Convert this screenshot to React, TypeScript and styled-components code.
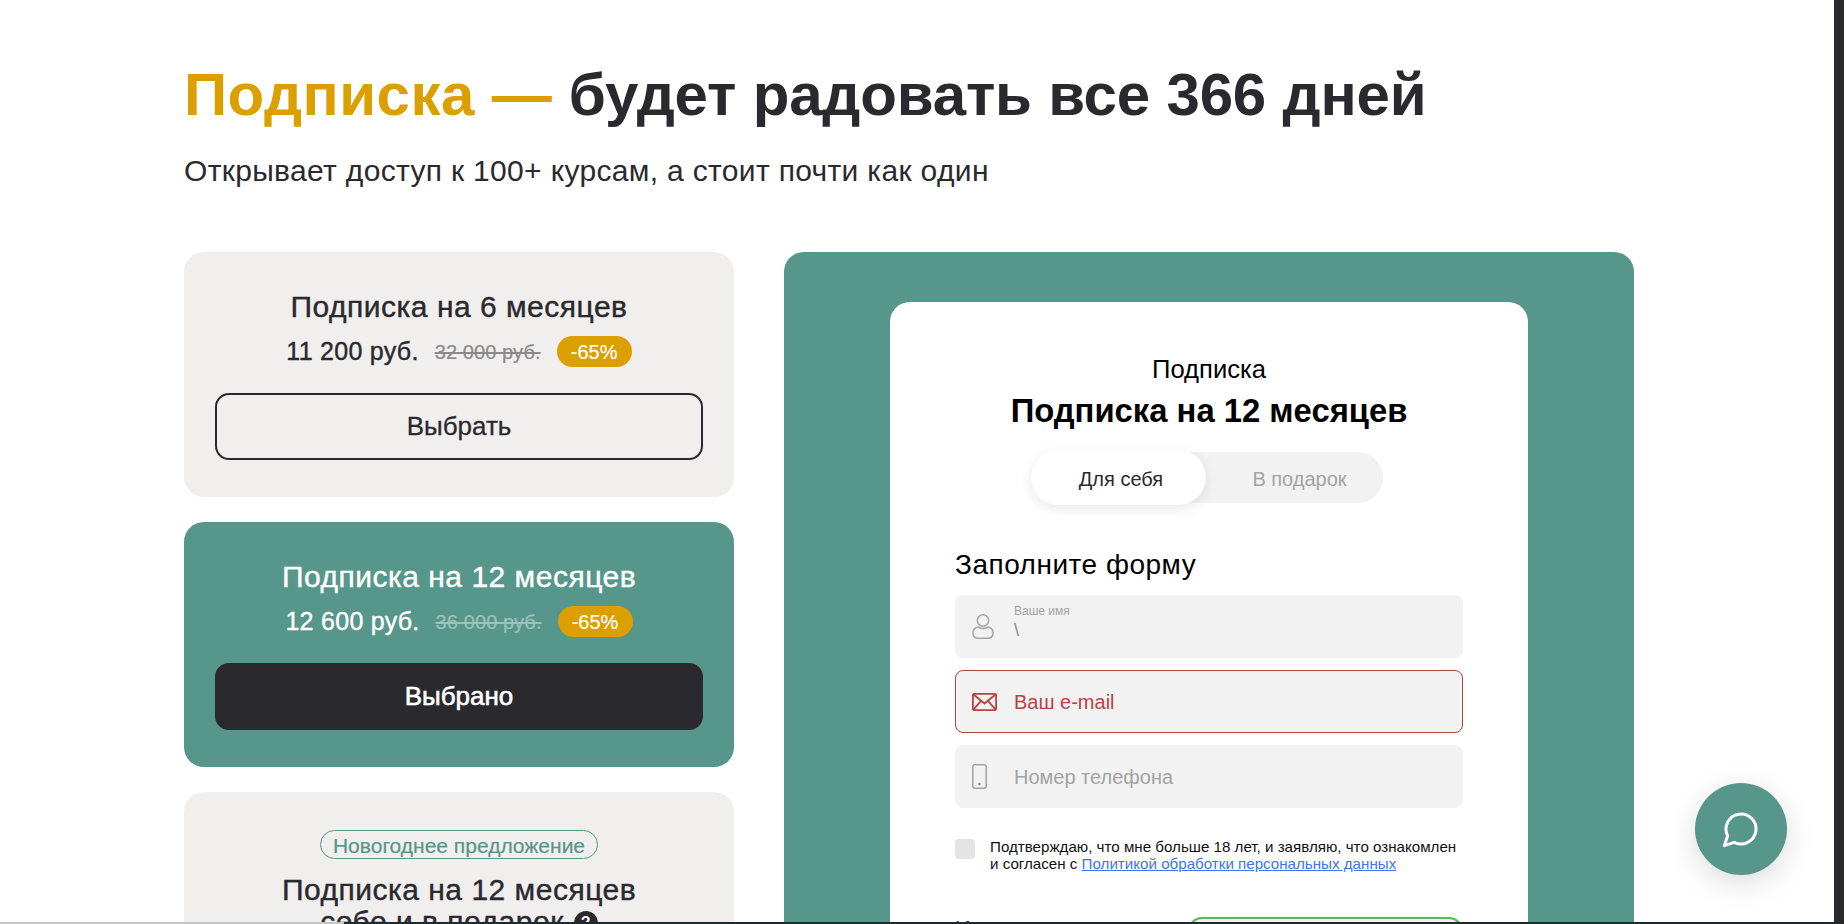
import React from "react";
import styled, { createGlobalStyle } from "styled-components";

const Global = createGlobalStyle`
  html, body { margin: 0; padding: 0; height: 100%; background: #fff; overflow: hidden; }
  #root { height: 100%; }
  * { box-sizing: border-box; }
  body { font-family: "Liberation Sans", Arial, sans-serif; color: #2a292e; }
`;

const green = "#57968a";
const dark = "#2a292e";
const gold = "#db9f00";
const danger = "#b84343";

const Viewport = styled.div`
  position: relative;
  width: 1844px;
  height: 924px;
  display: flex;
  flex-direction: column;
  overflow: hidden;
`;
const Workspace = styled.div`
  flex: 1;
  min-height: 0;
  display: flex;
`;
const Page = styled.main`
  flex: 1;
  min-width: 0;
  overflow: hidden;
  padding: 59px 0 0 184px;
  background: #fff;
`;
const ScrollEdge = styled.div`
  width: 10px;
  background: ${dark};
`;
const BottomEdge = styled.div`
  height: 2px;
  flex: none;
  display: flex;
  background: #1b2b2e;
`;
const BottomThumb = styled.div`
  width: 344px;
  background: #c6c6c6;
`;
const Heading = styled.h1`
  margin: 0;
  font-size: 60px;
  line-height: 72px;
  font-weight: 700;
  letter-spacing: -0.17px;
  color: ${dark};
`;
const Accent = styled.span`
  color: ${gold};
  letter-spacing: 0.47px;
`;
const Subtitle = styled.p`
  margin: 22px 0 63px;
  font-size: 30px;
  line-height: 36px;
  letter-spacing: 0.33px;
  color: ${dark};
`;
const Columns = styled.div`
  display: flex;
  gap: 50px;
  align-items: flex-start;
`;
const PlanColumn = styled.div`
  width: 550px;
  flex: none;
  display: flex;
  flex-direction: column;
  gap: 25px;
`;
const PlanCard = styled.section<{ $active?: boolean }>`
  padding: 37px 31px;
  border-radius: 20px;
  display: flex;
  flex-direction: column;
  align-items: center;
  background: ${(p) => (p.$active ? green : "#f0efed")};
  color: ${(p) => (p.$active ? "#fff" : dark)};
`;
const OfferTag = styled.div`
  height: 29px;
  width: 278px;
  margin: 1px 0 13px;
  padding-top: 2px;
  border: 1px solid ${green};
  border-radius: 15px;
  display: flex;
  align-items: center;
  justify-content: center;
  font-size: 21px;
  color: ${green};
  -webkit-text-stroke: 0.2px currentColor;
`;
const PlanTitle = styled.h3`
  margin: 0;
  font-size: 30px;
  line-height: 36px;
  font-weight: 400;
  letter-spacing: 0.5px;
  text-align: center;
  -webkit-text-stroke: 0.4px currentColor;
`;
const TitleSecondLine = styled.span`
  display: block;
  margin-top: -4px;
`;
const HelpDot = styled.span`
  display: inline-flex;
  width: 24px;
  height: 24px;
  border-radius: 50%;
  margin-left: 10px;
  background: ${dark};
  color: #fff;
  font-size: 16px;
  font-weight: 700;
  align-items: center;
  justify-content: center;
  vertical-align: 4px;
  -webkit-text-stroke: 0;
`;
const PriceRow = styled.div`
  margin-top: 11px;
  height: 31px;
  display: flex;
  align-items: center;
`;
const Price = styled.span`
  font-size: 25px;
  letter-spacing: 0.28px;
  -webkit-text-stroke: 0.4px currentColor;
`;
const OldPrice = styled.s<{ $active?: boolean }>`
  margin-left: 16px;
  padding-top: 2px;
  font-size: 20px;
  letter-spacing: 0.1px;
  color: ${(p) => (p.$active ? "#9cc2ba" : "#8b8a8a")};
  -webkit-text-stroke: 0.2px currentColor;
`;
const Discount = styled.span`
  margin-left: 16px;
  width: 75px;
  height: 31px;
  padding-top: 2px;
  border-radius: 16px;
  background: ${gold};
  color: #fff;
  font-size: 20px;
  display: flex;
  align-items: center;
  justify-content: center;
  -webkit-text-stroke: 0.2px currentColor;
`;
const PlanButton = styled.button<{ $active?: boolean }>`
  margin-top: 26px;
  width: 100%;
  height: 67px;
  border-radius: 14px;
  border: 2px solid ${dark};
  background: ${(p) => (p.$active ? dark : "transparent")};
  color: ${(p) => (p.$active ? "#fff" : dark)};
  font-family: inherit;
  font-size: 26px;
  font-weight: 400;
  -webkit-text-stroke: ${(p) => (p.$active ? "0.6px" : "0.3px")} currentColor;
`;
const OrderPanel = styled.section`
  width: 850px;
  flex: none;
  height: 800px;
  padding-top: 50px;
  border-radius: 20px;
  background: ${green};
  display: flex;
  justify-content: center;
`;
const OrderCard = styled.div`
  width: 638px;
  height: 800px;
  padding: 52px 65px 0;
  background: #fff;
  border-radius: 20px;
  display: flex;
  flex-direction: column;
`;
const Kicker = styled.div`
  font-size: 25.6px;
  line-height: 30px;
  color: #000;
  text-align: center;
`;
const OrderTitle = styled.h2`
  margin: 7px 0 0;
  font-size: 32.8px;
  line-height: 40px;
  font-weight: 700;
  color: #000;
  text-align: center;
`;
const Toggle = styled.div`
  align-self: center;
  margin: 21px 4px 0 0;
  width: 352px;
  height: 51px;
  border-radius: 26px;
  background: #f2f2f2;
  display: flex;
  align-items: center;
`;
const ToggleItem = styled.div<{ $on?: boolean }>`
  width: ${(p) => (p.$on ? "175px" : "177px")};
  height: ${(p) => (p.$on ? "55px" : "51px")};
  padding: ${(p) => (p.$on ? "3px 0 0 5px" : "3px 0 0 10px")};
  border-radius: 28px;
  display: flex;
  align-items: center;
  justify-content: center;
  font-size: 20px;
  background: ${(p) => (p.$on ? "#fff" : "transparent")};
  color: ${(p) => (p.$on ? dark : "#a3a3a3")};
  box-shadow: ${(p) => (p.$on ? "0 4px 14px rgba(0,0,0,.09)" : "none")};
`;
const FormHeading = styled.h4`
  margin: 46px 0 14px;
  font-size: 28px;
  line-height: 32px;
  font-weight: 400;
  letter-spacing: 0.5px;
  color: #000;
`;
const Fields = styled.div`
  display: flex;
  flex-direction: column;
  gap: 12px;
`;
const Field = styled.div<{ $error?: boolean }>`
  height: 63px;
  padding-left: 16px;
  border-radius: 8px;
  background: #f2f2f2;
  border: 1px solid ${(p) => (p.$error ? danger : "transparent")};
  display: flex;
  align-items: center;
  color: ${(p) => (p.$error ? danger : "#a3a3a3")};
`;
const FieldIcon = styled.div`
  width: 41px;
  flex: none;
  display: flex;
  align-items: center;
`;
const FieldText = styled.div`
  font-size: 20px;
  line-height: 24px;
  padding: 1px 0 0 1px;
`;
const FloatLabel = styled.div`
  font-size: 12px;
  line-height: 13px;
  margin: -8px 0 0 1px;
`;
const FloatValue = styled.div`
  font-size: 18px;
  line-height: 20px;
  margin: 2px 0 0 1px;
  color: #8d8d8d;
`;
const Consent = styled.label`
  margin-top: 31px;
  display: flex;
  gap: 15px;
  font-size: 15.15px;
  line-height: 17px;
  color: #111;
`;
const ConsentText = styled.span`
  margin-top: -1px;
`;
const Check = styled.span`
  width: 20px;
  height: 20px;
  flex: none;
  border-radius: 4px;
  background: #e4e4e4;
`;
const PolicyLink = styled.a`
  color: #3f74f0;
  text-decoration: underline;
`;
const TotalRow = styled.div`
  margin-top: 45px;
  display: flex;
  justify-content: space-between;
  align-items: flex-start;
`;
const TotalLabel = styled.div`
  margin-top: -2px;
  font-size: 22px;
  line-height: 28px;
  color: #333;
`;
const PayButton = styled.div`
  width: 275px;
  height: 66px;
  border-radius: 14px;
  border: 2px solid #5cb85c;
  background: #f2f2f2;
`;
const ChatButton = styled.button`
  position: absolute;
  left: 1695px;
  top: 783px;
  width: 92px;
  height: 92px;
  border: 0;
  padding: 0;
  border-radius: 50%;
  background: ${green};
  display: flex;
  align-items: center;
  justify-content: center;
  box-shadow: 0 8px 30px rgba(0, 0, 0, 0.14);
`;

const PersonIcon = () => (
  <svg width="22" height="25" viewBox="0 0 22 25" fill="none" stroke="#a3a3a3" strokeWidth="1.5">
    <circle cx="11" cy="6.5" r="5.7" />
    <path d="M6.5 13.2H6a5 5 0 0 0-5 5v1.3a4.8 4.8 0 0 0 4.8 4.8h10.4a4.8 4.8 0 0 0 4.8-4.8v-1.3a5 5 0 0 0-5-5h-.5c-1.4 1.8-7.1 1.8-8.5 0Z" />
  </svg>
);
const MailIcon = () => (
  <svg width="25" height="18" viewBox="0 0 25 18" fill="none" stroke={danger} strokeWidth="1.8">
    <rect x=".9" y=".9" width="23.2" height="16.2" rx="1.2" />
    <path d="M1.2 1.3 12.5 10.5 23.8 1.3M1.2 16.8l7.6-8.6M23.8 16.8l-7.6-8.6" />
  </svg>
);
const PhoneIcon = () => (
  <svg width="15" height="25" viewBox="0 0 15 25" fill="none" stroke="#a3a3a3" strokeWidth="1.5">
    <rect x=".8" y=".8" width="13.4" height="23.4" rx="2.2" />
    <circle cx="7.5" cy="20" r="1.3" fill="#8d8d8d" stroke="none" />
  </svg>
);
const ChatIcon = () => (
  <svg width="40" height="40" viewBox="0 0 24 24" fill="none" stroke="#fff" strokeWidth="1.8" strokeLinejoin="round">
    <path d="M7.9 20A9 9 0 1 0 4 16.1L2 22Z" />
  </svg>
);

const Plan = (p: { title: string; price: string; old: string; active?: boolean; button: string }) => (
  <PlanCard $active={p.active}>
    <PlanTitle>{p.title}</PlanTitle>
    <PriceRow>
      <Price>{p.price}</Price>
      <OldPrice $active={p.active}>{p.old}</OldPrice>
      <Discount>-65%</Discount>
    </PriceRow>
    <PlanButton $active={p.active}>{p.button}</PlanButton>
  </PlanCard>
);

export default function App() {
  return (
    <Viewport>
      <Global />
      <Workspace>
        <Page>
          <Heading>
            <Accent>Подписка —</Accent> будет радовать все 366 дней
          </Heading>
          <Subtitle>Открывает доступ к 100+ курсам, а стоит почти как один</Subtitle>
          <Columns>
            <PlanColumn>
              <Plan title="Подписка на 6 месяцев" price="11 200 руб." old="32 000 руб." button="Выбрать" />
              <Plan active title="Подписка на 12 месяцев" price="12 600 руб." old="36 000 руб." button="Выбрано" />
              <PlanCard>
                <OfferTag>Новогоднее предложение</OfferTag>
                <PlanTitle>
                  Подписка на 12 месяцев
                  <TitleSecondLine>
                    себе и в подарок<HelpDot>?</HelpDot>
                  </TitleSecondLine>
                </PlanTitle>
              </PlanCard>
            </PlanColumn>
            <OrderPanel>
              <OrderCard>
                <Kicker>Подписка</Kicker>
                <OrderTitle>Подписка на 12 месяцев</OrderTitle>
                <Toggle>
                  <ToggleItem $on>Для себя</ToggleItem>
                  <ToggleItem>В подарок</ToggleItem>
                </Toggle>
                <FormHeading>Заполните форму</FormHeading>
                <Fields>
                  <Field>
                    <FieldIcon><PersonIcon /></FieldIcon>
                    <div>
                      <FloatLabel>Ваше имя</FloatLabel>
                      <FloatValue>\</FloatValue>
                    </div>
                  </Field>
                  <Field $error>
                    <FieldIcon><MailIcon /></FieldIcon>
                    <FieldText>Ваш e-mail</FieldText>
                  </Field>
                  <Field>
                    <FieldIcon><PhoneIcon /></FieldIcon>
                    <FieldText>Номер телефона</FieldText>
                  </Field>
                </Fields>
                <Consent>
                  <Check />
                  <ConsentText>
                    Подтверждаю, что мне больше 18 лет, и заявляю, что ознакомлен
                    <br />и согласен с <PolicyLink href="#">Политикой обработки персональных данных</PolicyLink>
                  </ConsentText>
                </Consent>
                <TotalRow>
                  <TotalLabel>Итого</TotalLabel>
                  <PayButton />
                </TotalRow>
              </OrderCard>
            </OrderPanel>
          </Columns>
        </Page>
        <ScrollEdge />
      </Workspace>
      <BottomEdge>
        <BottomThumb />
      </BottomEdge>
      <ChatButton aria-label="Чат">
        <ChatIcon />
      </ChatButton>
    </Viewport>
  );
}
